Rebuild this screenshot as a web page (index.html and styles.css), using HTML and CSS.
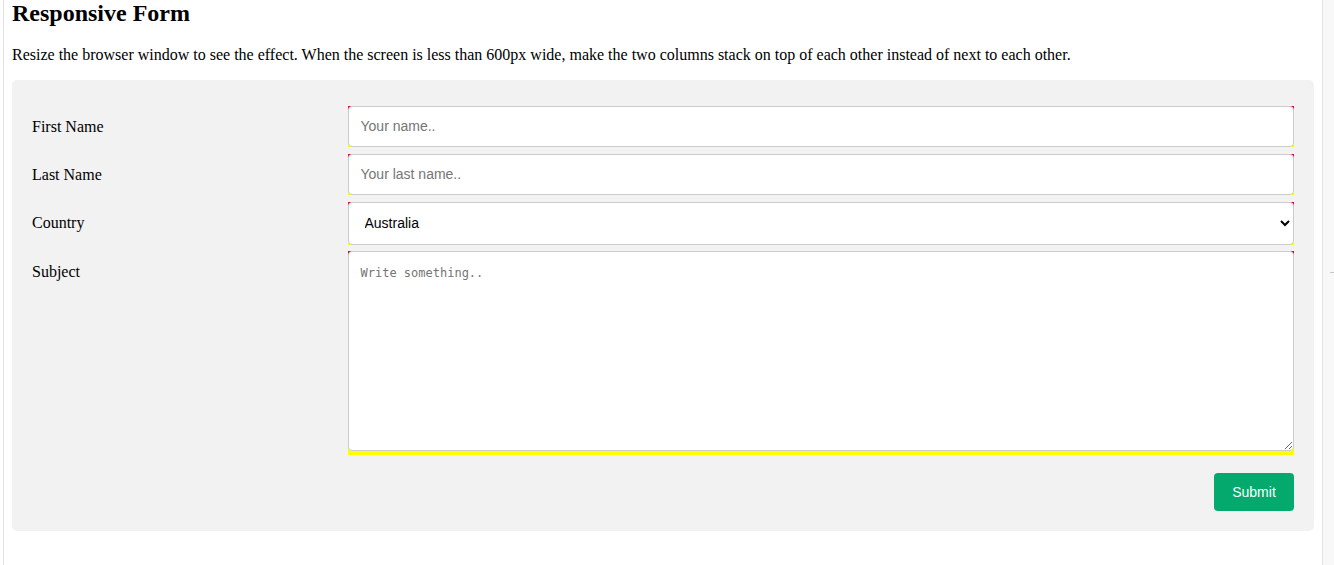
FILE: index.html
```html
<!DOCTYPE html>
<html>
<head>
<meta charset="utf-8">
<link rel="stylesheet" href="styles.css">
</head>
<body>
<div class="shell">
  <div class="gutter-left"></div>
  <div class="page">
    <h2 class="title">Responsive Form</h2>
    <p class="intro">Resize the browser window to see the effect. When the screen is less than 600px wide, make the two columns stack on top of each other instead of next to each other.</p>
    <div class="container">
      <form class="form">
        <div class="row">
          <div class="col-25"><label class="label" for="fname">First Name</label></div>
          <div class="col-75"><input class="field text" type="text" id="fname" placeholder="Your name.."></div>
        </div>
        <div class="row">
          <div class="col-25"><label class="label" for="lname">Last Name</label></div>
          <div class="col-75"><input class="field text" type="text" id="lname" placeholder="Your last name.."></div>
        </div>
        <div class="row">
          <div class="col-25"><label class="label" for="country">Country</label></div>
          <div class="col-75">
            <select class="field select" id="country">
              <option>Australia</option>
              <option>Canada</option>
              <option>USA</option>
            </select>
          </div>
        </div>
        <div class="row">
          <div class="col-25"><label class="label" for="subject">Subject</label></div>
          <div class="col-75"><textarea class="field area" id="subject" placeholder="Write something.."></textarea></div>
        </div>
        <br>
        <div class="row">
          <input class="submit" type="submit" value="Submit">
        </div>
      </form>
    </div>
  </div>
  <div class="gutter-right"><span class="tick"></span></div>
</div>
</body>
</html>
```
FILE: styles.css
```css
html, body {
  margin: 0;
  padding: 0;
  background: #ffffff;
  overflow: hidden;
}

.shell {
  display: flex;
  height: 565px;
  overflow: hidden;
}

.gutter-left {
  width: 3px;
  flex: none;
  background: #ffffff;
}

.page {
  width: 1302px;
  flex: none;
  padding: 0 8px;
  border-left: 1px solid #e3e3e3;
  border-right: 1px solid #e3e3e3;
  font-family: "Liberation Serif", "Times New Roman", serif;
  font-size: 16px;
  color: #000;
  background: #fff;
}

.gutter-right {
  flex: 1;
  background: #f8f8f8;
  position: relative;
}

.tick {
  position: absolute;
  left: 7px;
  top: 272px;
  width: 5px;
  height: 1px;
  background: #c8c8c8;
}

.title {
  font-size: 24px;
  font-weight: bold;
  margin: 0 0 19.92px;
  line-height: 26px;
}

.intro {
  margin: 0 0 16px;
}

.container {
  border-radius: 5px;
  background: #f2f2f2;
  padding: 20px;
}

.form {
  margin: 0;
}

.row::after {
  content: "";
  display: table;
  clear: both;
}

.col-25 {
  float: left;
  width: 25%;
  margin-top: 6px;
}

.col-75 {
  float: left;
  width: 75%;
  margin-top: 6px;
  background: linear-gradient(#e0002a, #ffff00 60%, #ffff00);
}

.label {
  display: inline-block;
  padding: 12px 12px 12px 0;
}

.field {
  width: 100%;
  box-sizing: border-box;
  padding: 12px;
  border: 1px solid #ccc;
  border-radius: 4px;
  background: #fff;
  font-family: "Liberation Sans", Arial, sans-serif;
  font-size: 14px;
  color: #000;
  margin: 0;
}

.text {
  height: 41px;
}

.field::placeholder {
  color: #757575;
}

.select {
  height: 43px;
  padding: 0 12px;
  font-size: 14px;
}

.area {
  height: 200px;
  resize: vertical;
  font-family: "DejaVu Sans Mono", "Liberation Mono", monospace;
  font-size: 12px;
  padding-top: 14px;
  vertical-align: baseline;
}

.submit {
  float: right;
  width: 80px;
  height: 38px;
  background-color: #04aa6d;
  color: #fff;
  padding: 0;
  border: none;
  border-radius: 4px;
  font-family: "Liberation Sans", Arial, sans-serif;
  font-size: 14px;
  text-align: center;
  cursor: pointer;
  margin: 0;
}
```
